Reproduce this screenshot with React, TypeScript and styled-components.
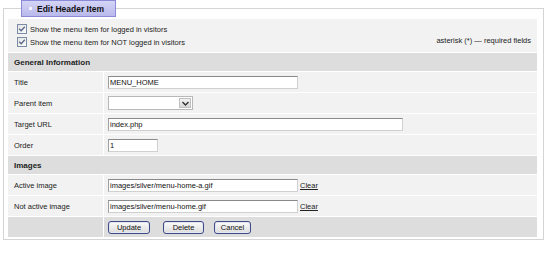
import React from 'react';
import styled, { createGlobalStyle } from 'styled-components';

const GlobalStyle = createGlobalStyle`
  body {
    margin: 0;
    background: #ffffff;
    font-family: Tahoma, "Liberation Sans", Arial, sans-serif;
    font-size: 7.5px;
    color: #222;
  }
`;

const fields = [
  { label: 'Title', value: 'MENU_HOME', width: 190 },
  { label: 'Parent item', select: true },
  { label: 'Target URL', value: 'index.php', width: 295 },
  { label: 'Order', value: '1', width: 50 },
];

const images = [
  { label: 'Active image', value: 'images/silver/menu-home-a.gif' },
  { label: 'Not active image', value: 'images/silver/menu-home.gif' },
];

export default function App() {
  return (
    <>
      <GlobalStyle />
      <Frame>
        <Tab>
          <Bullet />
          Edit Header Item
        </Tab>
        <Form>
          <Options>
            <Checks>
              <CheckRow>
                <Check />
                Show the menu item for logged in visitors
              </CheckRow>
              <CheckRow>
                <Check />
                Show the menu item for NOT logged in visitors
              </CheckRow>
            </Checks>
            <Note>asterisk (*) — required fields</Note>
          </Options>
          <Section>General Information</Section>
          {fields.map(f => (
            <Row key={f.label}>
              <Label>{f.label}</Label>
              <Value>
                {f.select ? (
                  <Select>
                    <Arrow>
                      <svg width="7" height="5" viewBox="0 0 7 5">
                        <path d="M0.5 1 L3.5 4 L6.5 1" fill="none" stroke="#333" strokeWidth="1.4" />
                      </svg>
                    </Arrow>
                  </Select>
                ) : (
                  <Input $w={f.width!}>{f.value}</Input>
                )}
              </Value>
            </Row>
          ))}
          <Section>Images</Section>
          {images.map(f => (
            <Row key={f.label}>
              <Label>{f.label}</Label>
              <Value>
                <Input $w={190}>{f.value}</Input>
                <ClearLink>Clear</ClearLink>
              </Value>
            </Row>
          ))}
          <Row $dark>
            <Label />
            <Value>
              <Button $w={42}>Update</Button>
              <Button $w={41} $ml={11}>Delete</Button>
              <Button $w={37} $ml={8}>Cancel</Button>
            </Value>
          </Row>
        </Form>
      </Frame>
    </>
  );
}

function Check() {
  return (
    <CheckBox>
      <svg width="8" height="8" viewBox="0 0 8 8">
        <path d="M1.2 3.8 L3.2 5.8 L6.8 1.8" fill="none" stroke="#5a6a88" strokeWidth="1.3" />
      </svg>
    </CheckBox>
  );
}

const Frame = styled.fieldset`
  margin: 0 0 0 3px;
  width: 541px;
  height: 240px;
  box-sizing: border-box;
  border: 1px solid #d4d4d4;
  padding: 0 4px 0 4px;
`;

const Tab = styled.legend`
  margin-left: 13px;
  padding: 0 8px 0 7px;
  height: 17px;
  width: 95px;
  box-sizing: border-box;
  display: flex;
  align-items: center;
  gap: 5px;
  background: linear-gradient(#d4d4f6, #b9b9ec);
  border: 1px solid #8a8ad8;
  font-weight: bold;
  font-size: 8.5px;
  white-space: nowrap;
  color: #111;
`;

const Bullet = styled.span`
  width: 3px;
  height: 3px;
  background: #f4f4ff;
`;

const Form = styled.div`
  margin-top: 2px;
  width: 529px;
  display: flex;
  flex-direction: column;
  gap: 1px;
  background: #ffffff;
`;

const Options = styled.div`
  background: #f2f2f2;
  height: 33px;
  padding: 5px 6px 0 9px;
  box-sizing: border-box;
  display: flex;
  justify-content: space-between;
`;

const Checks = styled.div`
  display: flex;
  flex-direction: column;
  gap: 3px;
`;

const CheckRow = styled.div`
  display: flex;
  align-items: center;
  gap: 3px;
  height: 10px;
`;

const CheckBox = styled.span`
  width: 10px;
  height: 10px;
  box-sizing: border-box;
  border: 1px solid #7b8ba8;
  background: linear-gradient(135deg, #e4e4e4, #fbfbfb);
  display: flex;
  align-items: center;
  justify-content: center;
`;

const Note = styled.div`
  align-self: flex-end;
  margin-bottom: 7px;
`;

const Section = styled.div`
  background: #dddddd;
  height: 18px;
  padding-left: 6px;
  display: flex;
  align-items: center;
  font-weight: bold;
  font-size: 8px;
`;

const Row = styled.div<{ $dark?: boolean }>`
  display: grid;
  grid-template-columns: 95px 1fr;
  gap: 1px;
  height: 20px;
  background: #ffffff;

  & > * {
    background: ${p => (p.$dark ? '#dddddd' : '#f2f2f2')};
  }
`;

const Label = styled.div`
  padding-left: 6px;
  display: flex;
  align-items: center;
`;

const Value = styled.div`
  padding-left: 4px;
  display: flex;
  align-items: center;
  gap: 2px;
`;

const Input = styled.div<{ $w: number }>`
  width: ${p => p.$w}px;
  height: 13px;
  box-sizing: border-box;
  background: #ffffff;
  border: 1px solid #d0d0d0;
  border-top-color: #8a8a8a;
  border-left-color: #a0a0a0;
  padding-left: 1px;
  display: flex;
  align-items: center;
  color: #111;
`;

const Select = styled.div`
  width: 85px;
  height: 14px;
  box-sizing: border-box;
  background: #ffffff;
  border: 1px solid #b8b8b8;
  display: flex;
  justify-content: flex-end;
  padding: 1px;
`;

const Arrow = styled.div`
  width: 12px;
  background: linear-gradient(#f2f2f2, #d8d8d8);
  border: 1px solid #c0c0c0;
  box-sizing: border-box;
  display: flex;
  align-items: center;
  justify-content: center;
`;

const ClearLink = styled.a`
  color: #222;
  text-decoration: underline;
`;

const Button = styled.div<{ $w: number; $ml?: number }>`
  width: ${p => p.$w}px;
  margin-left: ${p => p.$ml ?? 0}px;
  height: 13px;
  box-sizing: border-box;
  border: 1px solid #3c4a8a;
  border-radius: 3px;
  background: linear-gradient(#fbfbfb, #dcdcdc);
  box-shadow: inset 0 0 0 1px #e6e6ee;
  display: flex;
  align-items: center;
  justify-content: center;
  color: #111;
`;
